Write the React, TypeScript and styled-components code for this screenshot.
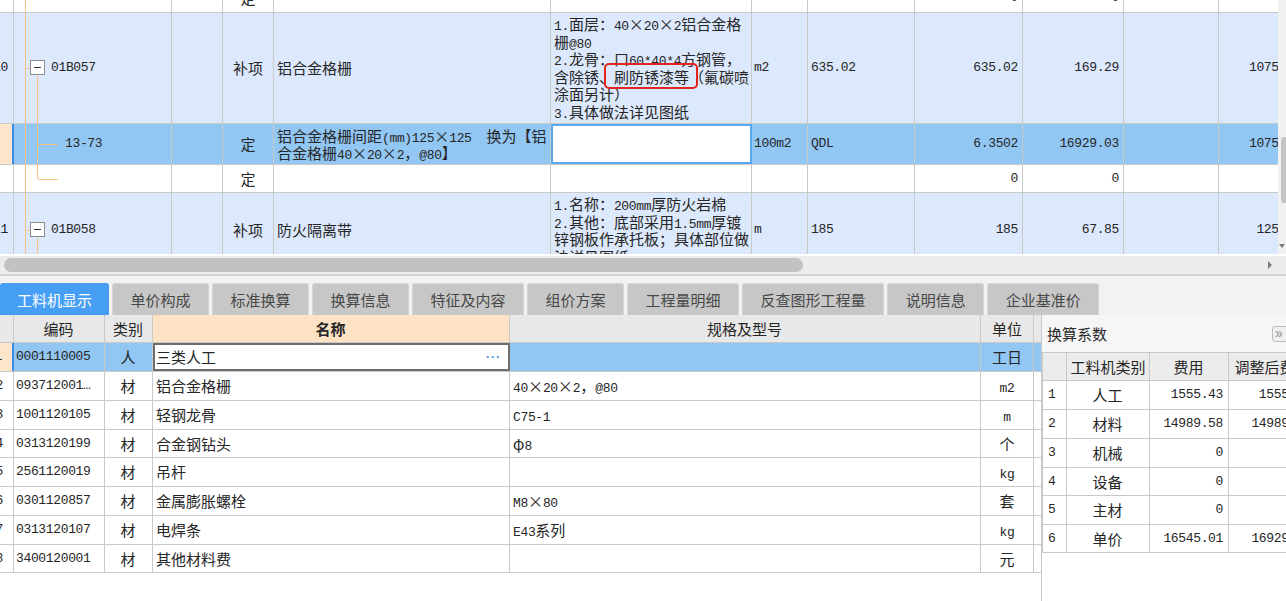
import React from 'react';
import styled, { createGlobalStyle, css } from 'styled-components';

const LINE = '#c9c9c9';
const ROW_BLUE = '#dce8fb';
const SEL = '#92c7f4';
const ORANGE = '#fde5cb';
const TREE = '#f7c283';
const TEXT = '#262626';

const GlobalStyle = createGlobalStyle`
  html, body { margin: 0; padding: 0; background: #ffffff; }
  body { font-family: "Noto Sans CJK SC", "Noto Sans", sans-serif; color: ${TEXT}; }
`;

const monoCss = css`
  font-family: "Liberation Mono", "DejaVu Sans Mono", monospace;
  font-size: 13px;
  letter-spacing: -0.35px;
`;

const Asc = styled.span`
  ${monoCss}
  line-height: 1;
  white-space: pre;
`;

const Wide = styled.span`
  display: inline-block;
  width: 1em;
  line-height: 1;
  text-align: center;
`;

function Mixed({ s }: { s: string }) {
  const out: React.ReactNode[] = [];
  s.split(/([\x20-\x7e]+)/).forEach((p, i) => {
    if (!p) return;
    if (i % 2 === 1) {
      out.push(<Asc key={i}>{p}</Asc>);
    } else {
      p.split(/(×)/).forEach((q, j) => {
        if (!q) return;
        out.push(
          q === '×' ? <Wide key={`${i}-${j}`}>×</Wide> : <React.Fragment key={`${i}-${j}`}>{q}</React.Fragment>
        );
      });
    }
  });
  return <>{out}</>;
}

const Txt = ({ s }: { s: string }) => (
  <span>
    <Mixed s={s} />
  </span>
);

/* ---------- layout ---------- */

const Screen = styled.div`
  width: 1286px;
  height: 601px;
  overflow: hidden;
  display: flex;
  flex-direction: column;
  background: #fff;
  font-size: 15px;
`;

const TopSection = styled.div`
  display: flex;
  height: 254px;
  flex: none;
`;

const TopViewport = styled.div`
  flex: 1;
  overflow: hidden;
  background: #fff;
`;

const TopInner = styled.div`
  width: 1320px;
  margin-top: -16px;
`;

const VScroll = styled.div`
  width: 8px;
  background: #f1f1f1;
  display: flex;
  flex-direction: column;
  align-items: flex-end;
`;

const VThumb = styled.div`
  margin-top: 137px;
  width: 5px;
  height: 66px;
  border-radius: 3px 0 0 3px;
  background: #c4c4c4;
`;

const VArrow = styled.div`
  margin-top: auto;
  margin-bottom: 6px;
  margin-right: 1px;
  border-left: 3px solid transparent;
  border-right: 3px solid transparent;
  border-top: 4px solid #7a7a7a;
`;

const HScroll = styled.div`
  flex: none;
  height: 18px;
  border-top: 2px solid #fff;
  border-bottom: 2px solid #d3d3d3;
  background: #ececec;
  display: flex;
  align-items: center;
  padding-left: 4px;
`;

const HThumb = styled.div`
  width: 799px;
  height: 14px;
  border-radius: 7px;
  background: #c2c2c2;
`;

const HArrow = styled.div`
  margin-left: auto;
  margin-right: 14px;
  border-top: 4px solid transparent;
  border-bottom: 4px solid transparent;
  border-left: 4px solid #7a7a7a;
`;

/* ---------- top grid ---------- */

const TopRow = styled.div<{ $h: number; $bg: string }>`
  display: grid;
  grid-template-columns: 14px 158px 51px 51px 277px 201px 56px 107px 108px 101px 95px 101px;
  height: ${(p) => p.$h}px;
  box-sizing: content-box;
  border-bottom: 1px solid ${LINE};
  background: ${(p) => p.$bg};
  font-size: 15px;
  line-height: 17.5px;
`;

type Align = 'l' | 'c' | 'r';

const Cell = styled.div<{
  $align?: Align;
  $top?: boolean;
  $bg?: string;
  $mono?: boolean;
  $pl?: number;
  $pr?: number;
  $edit?: string;
  $bold?: boolean;
}>`
  position: relative;
  box-sizing: border-box;
  display: flex;
  align-items: ${(p) => (p.$top ? 'flex-start' : 'center')};
  justify-content: ${(p) => (p.$align === 'c' ? 'center' : p.$align === 'r' ? 'flex-end' : 'flex-start')};
  padding: ${(p) => (p.$top ? 2 : 0)}px ${(p) => p.$pr ?? 4}px 0 ${(p) => p.$pl ?? 3}px;
  border-right: 1px solid ${LINE};
  background: ${(p) => p.$bg ?? 'transparent'};
  overflow: hidden;
  white-space: nowrap;
  font-weight: ${(p) => (p.$bold ? 700 : 400)};
  ${(p) => p.$mono && monoCss}
  ${(p) =>
    p.$edit &&
    css`
      outline: 2px solid ${p.$edit};
      outline-offset: -2px;
      background: #fff;
    `}
`;

const NumCell = styled.div<{ $sel?: boolean; $pr: number }>`
  box-sizing: border-box;
  display: flex;
  align-items: center;
  justify-content: flex-end;
  padding-right: ${(p) => p.$pr}px;
  overflow: hidden;
  white-space: nowrap;
  border-right: ${(p) => (p.$sel ? `2px solid #3d8de8` : `1px solid ${LINE}`)};
  background: ${(p) => (p.$sel ? ORANGE : 'transparent')};
  ${monoCss}
`;

const Lines = styled.div`
  line-height: 17.5px;
  & > div {
    height: 17.5px;
  }
`;

const Callout = styled.div`
  position: absolute;
  left: 53px;
  top: 50px;
  width: 94px;
  height: 26px;
  box-sizing: border-box;
  border: 2px solid #e5231c;
  border-radius: 5px;
  pointer-events: none;
`;

/* tree connectors (drawing) */
const Spine = styled.span`
  position: absolute;
  left: 11px;
  top: 0;
  bottom: 0;
  width: 1px;
  background: ${TREE};
`;

const Stub = styled.span<{ $x: number; $w: number }>`
  position: absolute;
  top: 50%;
  left: ${(p) => p.$x}px;
  width: ${(p) => p.$w}px;
  height: 1px;
  background: ${TREE};
`;

const Drop = styled.span<{ $top: string; $bottom: string }>`
  position: absolute;
  left: 23px;
  top: ${(p) => p.$top};
  bottom: ${(p) => p.$bottom};
  width: 1px;
  background: ${TREE};
`;

const Toggle = styled.span`
  position: absolute;
  left: 16px;
  top: 50%;
  margin-top: -8px;
  width: 15px;
  height: 15px;
  box-sizing: border-box;
  border: 1px solid #8c8c8c;
  background: #fff;
  &::after {
    content: '';
    position: absolute;
    left: 3px;
    right: 3px;
    top: 6px;
    height: 1px;
    background: #333;
  }
`;

const CodeText = styled.span<{ $indent: number }>`
  padding-left: ${(p) => p.$indent}px;
  ${monoCss}
`;

type TreeKind = 'spine' | 'parent' | 'child' | 'last';

function TreeCell({ kind, code }: { kind: TreeKind; code?: string }) {
  return (
    <Cell $pl={0}>
      <Spine />
      {kind === 'parent' && (
        <>
          <Stub $x={11} $w={5} />
          <Toggle />
          <Drop $top="calc(50% + 8px)" $bottom="0" />
        </>
      )}
      {kind === 'child' && (
        <>
          <Drop $top="0" $bottom="0" />
          <Stub $x={24} $w={20} />
        </>
      )}
      {kind === 'last' && (
        <>
          <Drop $top="0" $bottom="50%" />
          <Stub $x={24} $w={20} />
        </>
      )}
      {code && <CodeText $indent={kind === 'parent' ? 37 : 51}>{code}</CodeText>}
    </Cell>
  );
}

interface TopData {
  h: number;
  bg: string;
  num?: string;
  sel?: boolean;
  tree: TreeKind;
  code?: string;
  type?: string;
  name?: string[];
  feature?: string[];
  editing?: boolean;
  callout?: boolean;
  unit?: string;
  expr?: string;
  qty?: string;
  price?: string;
  total?: string;
}

const topRows: TopData[] = [
  { h: 28, bg: '#fff', tree: 'spine', type: '定', qty: '0', price: '0' },
  {
    h: 110,
    bg: ROW_BLUE,
    num: '10',
    tree: 'parent',
    code: '01B057',
    type: '补项',
    name: ['铝合金格栅'],
    feature: [
      '1.面层：40×20×2铝合金格',
      '栅@80',
      '2.龙骨：口60*40*4方钢管，',
      '含除锈、刷防锈漆等（氟碳喷',
      '涂面另计）',
      '3.具体做法详见图纸',
    ],
    callout: true,
    unit: 'm2',
    expr: '635.02',
    qty: '635.02',
    price: '169.29',
    total: '107502.54',
  },
  {
    h: 40,
    bg: SEL,
    sel: true,
    tree: 'child',
    code: '13-73',
    type: '定',
    name: ['铝合金格栅间距(mm)125×125  换为【铝', '合金格栅40×20×2，@80】'],
    editing: true,
    unit: '100m2',
    expr: 'QDL',
    qty: '6.3502',
    price: '16929.03',
    total: '107502.54',
  },
  { h: 27, bg: '#fff', tree: 'last', type: '定', qty: '0', price: '0' },
  {
    h: 74,
    bg: ROW_BLUE,
    num: '11',
    tree: 'parent',
    code: '01B058',
    type: '补项',
    name: ['防火隔离带'],
    feature: ['1.名称：200mm厚防火岩棉', '2.其他：底部采用1.5mm厚镀', '锌钢板作承托板；具体部位做', '法详见图纸'],
    unit: 'm',
    expr: '185',
    qty: '185',
    price: '67.85',
    total: '12552.25',
  },
];

function TopLine({ d }: { d: TopData }) {
  return (
    <TopRow $h={d.h} $bg={d.bg}>
      <NumCell $sel={d.sel} $pr={5}>
        {d.num}
      </NumCell>
      <TreeCell kind={d.tree} code={d.code} />
      <Cell />
      <Cell $align="c" $pl={3} $pr={3}>
        {d.type && <Txt s={d.type} />}
      </Cell>
      <Cell>
        {d.name && (
          <Lines>
            {d.name.map((l, i) => (
              <div key={i}>
                <Mixed s={l} />
              </div>
            ))}
          </Lines>
        )}
      </Cell>
      <Cell $top={!d.editing} $edit={d.editing ? '#5aa7f2' : undefined}>
        {d.feature && (
          <Lines>
            {d.feature.map((l, i) => (
              <div key={i}>
                <Mixed s={l} />
              </div>
            ))}
          </Lines>
        )}
        {d.callout && <Callout />}
      </Cell>
      <Cell $mono $pl={2}>
        {d.unit}
      </Cell>
      <Cell $mono>{d.expr}</Cell>
      <Cell $mono $align="r">
        {d.qty}
      </Cell>
      <Cell $mono $align="r">
        {d.price}
      </Cell>
      <Cell />
      <Cell $mono $align="r" $pr={3}>
        {d.total}
      </Cell>
    </TopRow>
  );
}

/* ---------- tabs ---------- */

const TabBar = styled.div`
  flex: none;
  height: 39px;
  box-sizing: border-box;
  padding-top: 7px;
  display: flex;
  gap: 3px;
  background: #f2f2f2;
`;

const Tab = styled.div<{ $active?: boolean }>`
  height: 32px;
  box-sizing: border-box;
  padding: 0 ${(p) => (p.$active ? 16 : 17.5)}px;
  display: flex;
  align-items: center;
  justify-content: center;
  font-size: 15px;
  white-space: nowrap;
  border-radius: 3px 3px 0 0;
  border: 1px solid ${(p) => (p.$active ? '#479ff5' : '#d5d5d5')};
  border-bottom: none;
  background: ${(p) => (p.$active ? '#479ff5' : '#c7c7c7')};
  color: ${(p) => (p.$active ? '#ffffff' : '#474747')};
`;

const tabs = ['工料机显示', '单价构成', '标准换算', '换算信息', '特征及内容', '组价方案', '工程量明细', '反查图形工程量', '说明信息', '企业基准价'];

/* ---------- bottom ---------- */

const Bottom = styled.div`
  flex: 1;
  min-height: 0;
  display: flex;
`;

const LeftPane = styled.div`
  width: 1041px;
  flex: none;
  overflow: hidden;
  background: #fff;
`;

const MatRow = styled.div<{ $h: number; $bg?: string }>`
  display: grid;
  grid-template-columns: 14px 91px 48px 357px 471px 53px 30px;
  height: ${(p) => p.$h}px;
  box-sizing: content-box;
  border-bottom: 1px solid ${LINE};
  background: ${(p) => p.$bg ?? '#fff'};
  font-size: 15px;
  line-height: 20px;
`;

const Dots = styled.span`
  margin-left: auto;
  color: #4a8fde;
  font-size: 12px;
  letter-spacing: 1px;
  font-family: "Liberation Sans", sans-serif;
  font-weight: 700;
`;

const mats: { h: number; c: string[] }[] = [
  { h: 28, c: ['1', '0001110005', '人', '三类人工', '', '工日'] },
  { h: 28, c: ['2', '093712001…', '材', '铝合金格栅', '40×20×2，@80', 'm2'] },
  { h: 28, c: ['3', '1001120105', '材', '轻钢龙骨', 'C75-1', 'm'] },
  { h: 27, c: ['4', '0313120199', '材', '合金钢钻头', 'φ8', '个'] },
  { h: 28, c: ['5', '2561120019', '材', '吊杆', '', 'kg'] },
  { h: 28, c: ['6', '0301120857', '材', '金属膨胀螺栓', 'M8×80', '套'] },
  { h: 28, c: ['7', '0313120107', '材', '电焊条', 'E43系列', 'kg'] },
  { h: 27, c: ['8', '3400120001', '材', '其他材料费', '', '元'] },
];

const RightPanel = styled.div`
  flex: 1;
  min-width: 0;
  box-sizing: border-box;
  border-left: 1px solid ${LINE};
  display: flex;
  flex-direction: column;
  background: #fff;
  overflow: hidden;
`;

const PanelTitle = styled.div`
  height: 37px;
  flex: none;
  box-sizing: border-box;
  display: flex;
  align-items: center;
  padding-left: 5px;
  background: #f6f6f6;
  font-size: 15px;
  color: #2a2a2a;
`;

const Collapse = styled.span`
  margin-left: auto;
  margin-right: -4px;
  width: 18px;
  height: 16px;
  box-sizing: border-box;
  border: 1px solid #bdbdbd;
  border-radius: 3px;
  background: #efefef;
  color: #8a8a8a;
  font-family: "Liberation Sans", sans-serif;
  font-size: 14px;
  line-height: 13px;
  padding-left: 2px;
  text-align: left;
`;

const CoefTable = styled.div`
  border-top: 1px solid ${LINE};
  border-left: 1px solid ${LINE};
  width: 300px;
`;

const CoefRow = styled.div<{ $h: number; $bg?: string }>`
  display: grid;
  grid-template-columns: 24px 83px 79px 88px;
  height: ${(p) => p.$h}px;
  box-sizing: content-box;
  border-bottom: 1px solid ${LINE};
  background: ${(p) => p.$bg ?? '#fff'};
  font-size: 15px;
  line-height: 20px;
`;

const coef: { h: number; c: string[] }[] = [
  { h: 28, c: ['1', '人工', '1555.43', '1555.43'] },
  { h: 28, c: ['2', '材料', '14989.58', '14989.58'] },
  { h: 28, c: ['3', '机械', '0', '0'] },
  { h: 27, c: ['4', '设备', '0', '0'] },
  { h: 28, c: ['5', '主材', '0', '0'] },
  { h: 27, c: ['6', '单价', '16545.01', '16929.03'] },
];

export default function App() {
  return (
    <>
      <GlobalStyle />
      <Screen>
        <TopSection>
          <TopViewport>
            <TopInner>
              {topRows.map((d, i) => (
                <TopLine key={i} d={d} />
              ))}
            </TopInner>
          </TopViewport>
          <VScroll>
            <VThumb />
            <VArrow />
          </VScroll>
        </TopSection>
        <HScroll>
          <HThumb />
          <HArrow />
        </HScroll>
        <TabBar>
          {tabs.map((t, i) => (
            <Tab key={t} $active={i === 0}>
              {t}
            </Tab>
          ))}
        </TabBar>
        <Bottom>
          <LeftPane>
            <MatRow $h={27} $bg="#e8e8e8">
              <Cell />
              <Cell $align="c">编码</Cell>
              <Cell $align="c">类别</Cell>
              <Cell $align="c" $bg="#fde3c4" $bold>
                名称
              </Cell>
              <Cell $align="c">规格及型号</Cell>
              <Cell $align="c" $pl={2} $pr={2}>
                单位
              </Cell>
              <Cell />
            </MatRow>
            {mats.map(({ h, c: m }, i) => {
              const sel = i === 0;
              return (
                <MatRow key={m[0]} $h={h} $bg={sel ? SEL : '#fff'}>
                  <NumCell $sel={sel} $pr={10}>
                    {m[0]}
                  </NumCell>
                  <Cell $mono $pl={2} $pr={2}>
                    {m[1]}
                  </Cell>
                  <Cell $align="c">
                    <Txt s={m[2]} />
                  </Cell>
                  <Cell $edit={sel ? '#6e6e6e' : undefined} $pr={8}>
                    <Txt s={m[3]} />
                    {sel && <Dots>···</Dots>}
                  </Cell>
                  <Cell>{m[4] && <Txt s={m[4]} />}</Cell>
                  <Cell $align="c" $pl={2} $pr={2}>
                    <Txt s={m[5]} />
                  </Cell>
                  <Cell />
                </MatRow>
              );
            })}
          </LeftPane>
          <RightPanel>
            <PanelTitle>
              换算系数
              <Collapse>»</Collapse>
            </PanelTitle>
            <CoefTable>
              <CoefRow $h={27} $bg="#ececec">
                <Cell />
                <Cell $align="c" $pl={2} $pr={2}>
                  工料机类别
                </Cell>
                <Cell $align="c">费用</Cell>
                <Cell $align="c">调整后费用</Cell>
              </CoefRow>
              {coef.map(({ h, c: r }) => (
                <CoefRow key={r[0]} $h={h}>
                  <Cell $mono $pl={5}>
                    {r[0]}
                  </Cell>
                  <Cell $align="c">{r[1]}</Cell>
                  <Cell $mono $align="r" $pr={5}>
                    {r[2]}
                  </Cell>
                  <Cell $mono $align="r" $pr={5}>
                    {r[3]}
                  </Cell>
                </CoefRow>
              ))}
            </CoefTable>
          </RightPanel>
        </Bottom>
      </Screen>
    </>
  );
}
